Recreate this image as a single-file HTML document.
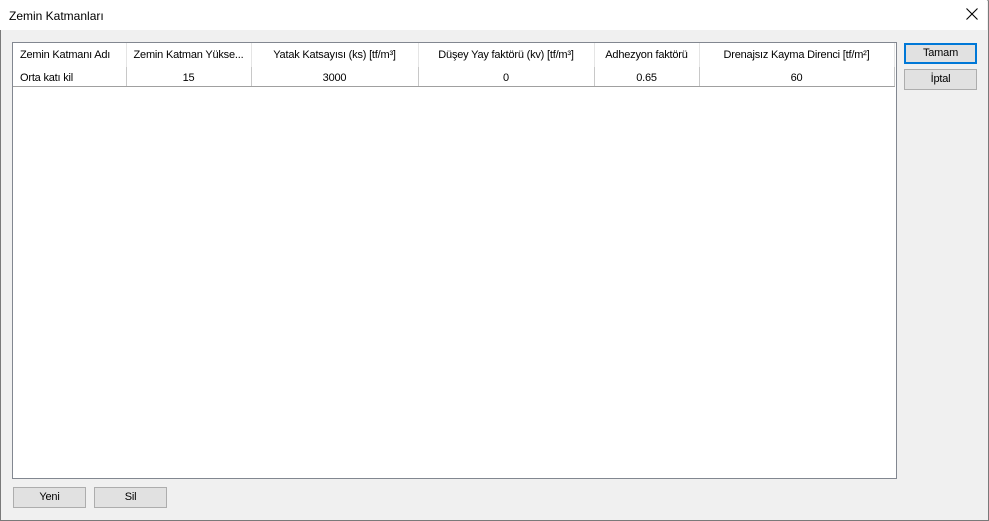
<!DOCTYPE html>
<html><head><style>
*{margin:0;padding:0;box-sizing:border-box}
body{width:989px;height:521px;background:#f0f0f0;font-family:"Liberation Sans",sans-serif;font-size:11px;color:#000;position:relative;overflow:hidden;letter-spacing:-0.2px}
.win{position:absolute;left:0;top:0;width:989px;height:521px;border:1px solid #7a7a7a;border-top-color:#aaa}
.title{position:absolute;left:0;top:0;width:987px;height:30px;background:#fff}
.title span{position:absolute;left:9px;top:9px;font-size:12px;letter-spacing:0}
.x{position:absolute;right:8px;top:7px}
.grid{position:absolute;left:12px;top:42px;width:885px;height:437px;background:#fff;border:1px solid #828790}
.c{position:absolute;top:0;height:44px;white-space:nowrap}
.h{position:absolute;top:6px;width:100%;text-align:center}
.d{position:absolute;top:29px;width:100%;text-align:center}
.sep{position:absolute;top:0;width:1px;height:24px;background:#e5e5e5}
.sep2{position:absolute;top:24px;width:1px;height:19px;background:#c8c8c8}
.hl{position:absolute;left:0;top:43px;width:882px;height:1px;background:#a0a0a0}
.btn{position:absolute;width:73px;height:21px;background:#e1e1e1;border:1px solid #adadad;text-align:center;line-height:19px;font-size:11px}
.def{border:2px solid #0078d7;line-height:17px}
</style></head><body>
<div class="win"></div>
<div class="title"><span>Zemin Katmanları</span>
<svg class="x" width="14" height="14" viewBox="0 0 14 14"><path d="M1.5 1.5L12.5 12.5M12.5 1.5L1.5 12.5" stroke="#000" stroke-width="1.1"/></svg></div>
<div class="grid">
 <div class="c" style="left:0;width:113px"><div class="h" style="text-align:left;left:7px">Zemin Katmanı Adı</div><div class="d" style="text-align:left;left:7px">Orta katı kil</div></div>
 <div class="c" style="left:113px;width:125px"><div class="h">Zemin Katman Yükse...</div><div class="d">15</div></div>
 <div class="c" style="left:238px;width:167px"><div class="h">Yatak Katsayısı (ks) [tf/m³]</div><div class="d">3000</div></div>
 <div class="c" style="left:405px;width:176px"><div class="h">Düşey Yay faktörü (kv) [tf/m³]</div><div class="d">0</div></div>
 <div class="c" style="left:581px;width:105px"><div class="h">Adhezyon faktörü</div><div class="d">0.65</div></div>
 <div class="c" style="left:686px;width:195px"><div class="h">Drenajsız Kayma Direnci [tf/m²]</div><div class="d">60</div></div>
 <div class="sep" style="left:113px"></div><div class="sep" style="left:238px"></div><div class="sep" style="left:405px"></div><div class="sep" style="left:581px"></div><div class="sep" style="left:686px"></div><div class="sep" style="left:881px"></div>
 <div class="sep2" style="left:113px"></div><div class="sep2" style="left:238px"></div><div class="sep2" style="left:405px"></div><div class="sep2" style="left:581px"></div><div class="sep2" style="left:686px"></div><div class="sep2" style="left:881px"></div>
 <div class="hl"></div>
</div>
<div class="btn def" style="left:904px;top:43px">Tamam</div>
<div class="btn" style="left:904px;top:69px">İptal</div>
<div class="btn" style="left:13px;top:487px">Yeni</div>
<div class="btn" style="left:94px;top:487px">Sil</div>
</body></html>
